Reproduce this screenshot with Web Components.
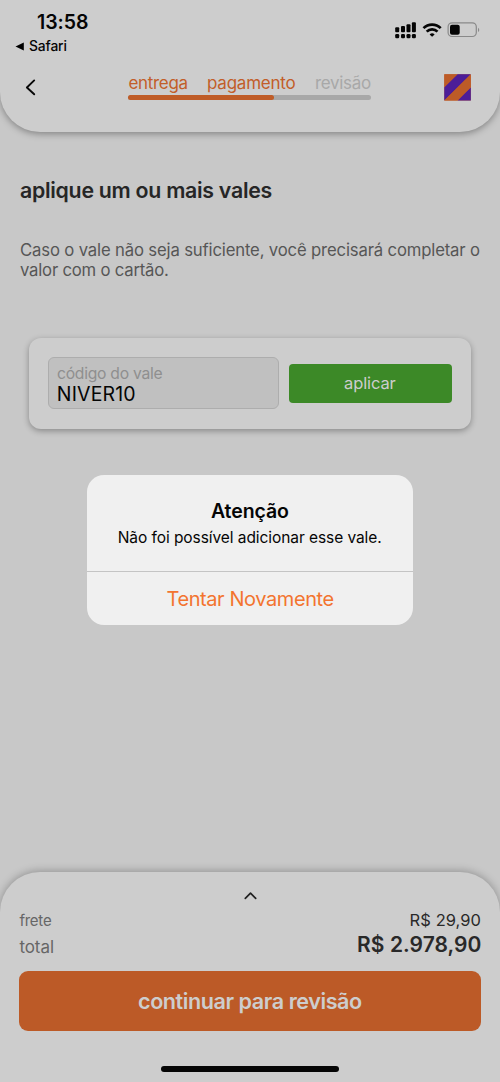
<!DOCTYPE html>
<html lang="pt-BR">
<head>
<meta charset="utf-8">
<title>Vales</title>
<style>
body{margin:0;background:#c8c8c8;font-family:Inter,"Liberation Sans",sans-serif;width:500px;height:1082px;overflow:hidden}
</style>
</head>
<body>
<voucher-screen></voucher-screen>
<script>
const define = (name, html, after) => customElements.define(name, class extends HTMLElement {
  constructor() {
    super();
    const t = document.createElement('template');
    t.innerHTML = html;
    this.attachShadow({mode: 'open'}).append(t.content.cloneNode(true));
  }
  connectedCallback() { if (after) after(this); }
});

// A single line whose tracking is set so that its glyphs span the given width.
const pen = document.createElement('canvas').getContext('2d');
define('tracked-text', `<style>
:host{display:block;flex:none;white-space:nowrap;font-kerning:normal}
</style><slot></slot>`, el => {
  const s = el.style, text = el.textContent;
  const [size, line, width, weight] = el.getAttribute('spec').split(' ');
  s.fontSize = size + 'px'; s.lineHeight = line + 'px'; s.height = line + 'px';
  s.width = width + 'px'; s.fontWeight = weight || 400;
  pen.font = `${weight || 400} ${size}px Inter, "Liberation Sans", sans-serif`;
  const m = pen.measureText(text);
  const ink = m.actualBoundingBoxLeft + m.actualBoundingBoxRight;
  s.letterSpacing = ((width - ink) / (text.length - 1)).toFixed(3) + 'px';
  s.textIndent = m.actualBoundingBoxLeft.toFixed(2) + 'px';
});

define('status-bar', `<style>
:host{display:flex;justify-content:space-between;height:54px;color:#050505}
.left{padding:9.5px 0 0 15px}
.time{margin-left:22px}
.back{display:flex;align-items:center;gap:5px;margin-top:4.5px}
.right{padding:21px 20px 0 0}
svg{display:block}
</style>
<div class="left"><tracked-text class="time" spec="19.5 24 51 600">13:58</tracked-text>
<div class="back"><svg width="9" height="9" viewBox="0 0 9 9"><path d="M.5 4.5 8.8.6v7.8z"/></svg><tracked-text spec="13.8 16 37.5 500">Safari</tracked-text></div></div>
<div class="right"><svg width="85" height="18" viewBox="395 21 85 18">
<g fill="#050505"><rect x="395.2" y="27.3" width="4" height="5" rx="1"/><rect x="401" y="26" width="4" height="6.3" rx="1"/><rect x="406.500" y="24.200" width="4" height="8.100" rx="1"/><rect x="411.900" y="22.200" width="4" height="10.100" rx="1"/>
<rect x="395.200" y="34" width="4" height="4.200" rx="1.300"/><rect x="401" y="34" width="4" height="4.200" rx="1.300"/><rect x="406.500" y="34" width="4" height="4.200" rx="1.300"/><rect x="411.900" y="34" width="4" height="4.200" rx="1.300"/>
<path d="M432.100 36.800l-2.500-2.400a3.700 3.700 0 0 1 5 0z"/></g>
<g fill="none" stroke="#050505" stroke-width="2.700"><path d="M423.500 28.100a12.200 12.200 0 0 1 17.200 0M426.700 31.600a7.600 7.600 0 0 1 10.800 0"/></g>
<rect x="448.100" y="22.800" width="28.200" height="13.700" rx="4" fill="none" stroke="#898989" stroke-width="1.200"/>
<rect x="450" y="24.700" width="9.700" height="10" rx="2" fill="#050505"/><path d="M478 27.700c1.700.7 1.700 3.700 0 4.400z" fill="#898989"/>
</svg></div>`);

define('step-progress', `<style>
:host{display:block;width:243px;color:#c25e29}
.steps{display:flex;gap:20.500px;padding:.7px 0 0 .5px}
.off{color:#a8a8a8}
.track{height:5px;border-radius:3px;background:#a8a8a8;margin-top:2.300px}
.fill{height:5px;width:146px;border-radius:3px;background:#bf5c27}
</style>
<div class="steps"><tracked-text spec="17 20 59">entrega</tracked-text><tracked-text spec="17 20 87.500">pagamento</tracked-text><tracked-text class="off" spec="17 20 55">revisão</tracked-text></div>
<div class="track"><div class="fill"></div></div>`);

define('checkout-header', `<style>
:host{display:block;box-sizing:border-box;height:131.500px;background:#cdcdcd;border-radius:0 0 40px 40px;box-shadow:0 2px 7px rgba(0,0,0,.34)}
.nav{display:flex;padding-top:18px}
svg{display:block;flex:none}
.chev{margin:7px 91px 0 25px}
.logo{margin:2px 0 0 73px}
</style>
<status-bar></status-bar>
<div class="nav"><svg class="chev" width="12" height="17" viewBox="0 0 12 17"><path d="M9.200 1.400 1.900 8.500l7.300 6.800" fill="none" stroke="#080808" stroke-width="1.900" stroke-linecap="round" stroke-linejoin="round"/></svg>
<step-progress></step-progress>
<svg class="logo" width="27" height="27" viewBox="0 0 27 27"><path fill="#bd5b27" d="M.3.300h26.500v26.200H.3z"/><path fill="#4c1d98" d="M13.500.300h13.300L.3 26.500V13.300zM26.800 13.300v13.200H13.500z"/><path fill="#bd5b27" d="M.3.300h13.200L.3 13.300zM26.800.300v13L13.500 26.500H.3z"/></svg></div>`);

define('voucher-form', `<style>
:host{display:flex;align-items:center;box-sizing:border-box;width:442px;height:91px;padding:0 19px;gap:10px;background:#cdcdcd;border-radius:12px;box-shadow:0 2px 6px rgba(0,0,0,.32)}
.field{box-sizing:border-box;width:231px;height:52.500px;border:1px solid #adadad;border-radius:6px;background:#c0c0c0;padding:7.700px 8px 0;color:#050505}
.label{color:#8f8f8f}
.value{margin:.300px 0 0 .800px}
.apply{display:flex;align-items:center;justify-content:center;width:163.500px;height:39px;border-radius:4px;background:#3c8927;color:#cdcdcd}
.apply>*{margin-right:1px}
</style>
<div class="field"><tracked-text class="label" spec="15.700 18 105.500">código do vale</tracked-text><tracked-text class="value" spec="19.500 20 77.500">NIVER10</tracked-text></div>
<div class="apply"><tracked-text spec="16.500 20 51.500">aplicar</tracked-text></div>`);

define('alert-dialog', `<style>
:host{display:flex;flex-direction:column;align-items:center;width:326px;height:150px;border-radius:17px;background:#f0f0f0;color:#050505}
.body{flex:none;box-sizing:border-box;width:100%;height:97.500px;padding-top:24px;border-bottom:1px solid #c4c4c4;display:flex;flex-direction:column;align-items:center;gap:5px}
.action{flex:none;box-sizing:border-box;height:52.500px;padding-top:1px;display:flex;align-items:center;color:#f3742f}
</style>
<div class="body"><tracked-text spec="19.500 24 78 600">Atenção</tracked-text><tracked-text spec="15.500 20 262.500">Não foi possível adicionar esse vale.</tracked-text></div>
<div class="action"><tracked-text spec="20 24 167">Tentar Novamente</tracked-text></div>`);

define('order-summary', `<style>
:host{display:flex;flex-direction:column;box-sizing:border-box;height:210px;padding:0 19.400px;background:#cdcdcd;border-radius:40px 40px 0 0;box-shadow:0 -1px 8px rgba(0,0,0,.28);color:#666}
.up{display:block;margin:19px auto 0}
.row{display:flex;justify-content:space-between;align-items:center}
.a{height:20px;margin-top:10px}
.a>:first-child{margin-top:2px}
.b{height:24px;margin-top:2.500px}
.b>:first-child{margin-top:4px}
.v{color:#292929}
.go{height:60px;margin-top:14.500px;border-radius:9px;background:#bc5a27;color:#cdcdcd;display:flex;align-items:center;justify-content:center}
.home{width:178.500px;height:6.300px;border-radius:4px;background:#050505;margin:35px auto 0}
</style>
<svg class="up" width="13" height="9" viewBox="0 0 13 9"><path d="M1.300 7.300l5.200-5.200 5.200 5.200" fill="none" stroke="#202020" stroke-width="1.700" stroke-linecap="round" stroke-linejoin="round"/></svg>
<div class="row a"><tracked-text spec="15 20 31.500">frete</tracked-text><tracked-text class="v" spec="16.500 20 70">R$ 29,90</tracked-text></div>
<div class="row b"><tracked-text spec="17 20 33.500">total</tracked-text><tracked-text class="v" spec="21 24 122.500 600">R$ 2.978,90</tracked-text></div>
<div class="go"><tracked-text spec="21.600 28 224 600">continuar para revisão</tracked-text></div>
<div class="home"></div>`);

define('voucher-screen', `<style>
:host{display:flex;flex-direction:column;position:relative;width:500px;height:1082px;background:#c8c8c8;overflow:hidden}
main{flex:1;padding:45px 20px 0;color:#565656}
.title{color:#262626}
.copy{margin-top:37.500px}
voucher-form{margin:57.500px 0 0 9px}
alert-dialog{position:absolute;left:87px;top:474.500px}
</style>
<checkout-header></checkout-header>
<main><tracked-text class="title" spec="21.300 26 251.500 600">aplique um ou mais vales</tracked-text>
<div class="copy"><tracked-text spec="16.700 20 460">Caso o vale não seja suficiente, você precisará completar o</tracked-text><tracked-text spec="16.700 20 148">valor com o cartão.</tracked-text></div>
<voucher-form></voucher-form></main>
<order-summary></order-summary>
<alert-dialog></alert-dialog>`);
</script>
</body>
</html>
